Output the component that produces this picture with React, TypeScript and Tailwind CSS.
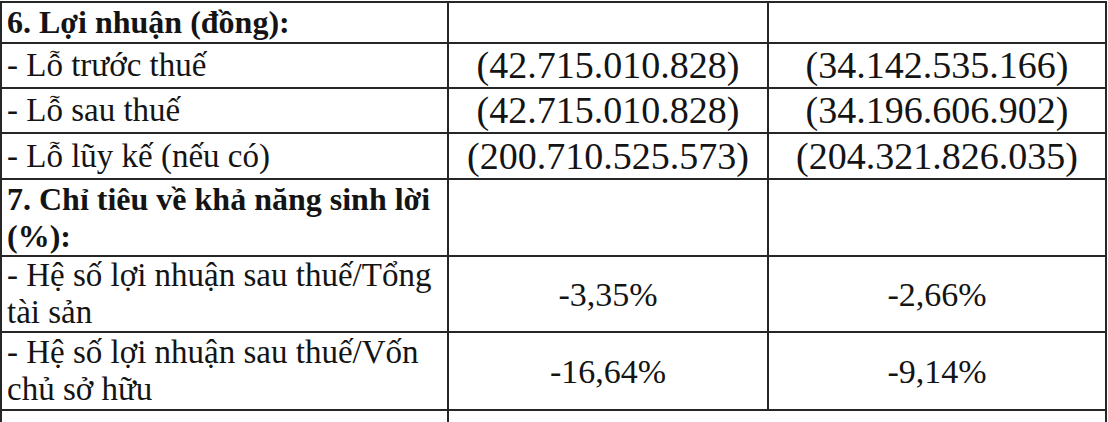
import React from 'react';

type Row = {
  label: string[];
  bold?: boolean;
  a?: string;
  b?: string;
  pct?: boolean;
  h: string;
};

const rows: Row[] = [
  { label: ['6. Lợi nhuận (đồng):'], bold: true, h: 'h-[41px]' },
  { label: ['- Lỗ trước thuế'], a: '(42.715.010.828)', b: '(34.142.535.166)', h: 'h-[45px]' },
  { label: ['- Lỗ sau thuế'], a: '(42.715.010.828)', b: '(34.196.606.902)', h: 'h-[45px]' },
  { label: ['- Lỗ lũy kế (nếu có)'], a: '(200.710.525.573)', b: '(204.321.826.035)', h: 'h-[46px]' },
  { label: ['7. Chỉ tiêu về khả năng sinh lời', '(%):'], bold: true, h: 'h-[77px]' },
  { label: ['- Hệ số lợi nhuận sau thuế/Tổng', 'tài sản'], a: '-3,35%', b: '-2,66%', pct: true, h: 'h-[76px]' },
  { label: ['- Hệ số lợi nhuận sau thuế/Vốn', 'chủ sở hữu'], a: '-16,64%', b: '-9,14%', pct: true, h: 'h-[78px]' },
];

export default function App() {
  return (
    <div className="w-[1108px] h-[422px] overflow-hidden bg-white text-[#141414] font-['Liberation_Serif','Times_New_Roman',serif] text-[33px] leading-[37px]">
      <div className="h-[1px]" />
      <div className="border-t-2 border-l-2 border-r-2 border-[#262626] w-[1107px]">
        {rows.map((r, i) => (
          <div key={i} className={`grid grid-cols-[447px_320px_1fr] border-b-2 border-[#262626] ${r.h}`}>
            <div className={`border-r-2 border-[#262626] pl-[5px] flex flex-col justify-center ${r.bold ? 'font-bold text-[32px]' : ''}`}>
              {r.label.map((l, j) => (
                <div key={j} className="whitespace-nowrap">{l}</div>
              ))}
            </div>
            <div className={`border-r-2 border-[#262626] flex items-center justify-center ${r.pct ? 'text-[34px]' : 'text-[38px]'}`}>{r.a}</div>
            <div className={`flex items-center justify-center ${r.pct ? 'text-[34px]' : 'text-[38px]'}`}>{r.b}</div>
          </div>
        ))}
        <div className="grid grid-cols-[447px_1fr] h-[40px]">
          <div className="border-r-2 border-[#262626]" />
          <div />
        </div>
      </div>
    </div>
  );
}
